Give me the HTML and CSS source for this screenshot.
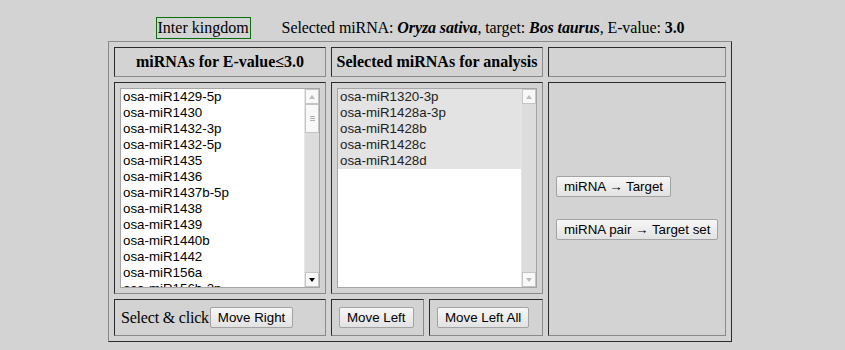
FILE: index.html
```html
<!DOCTYPE html>
<html>
<head>
<meta charset="utf-8">
<title>miRNA selection</title>
<link rel="stylesheet" href="styles.css">
</head>
<body>
<div class="page">
  <div class="title">
    <span class="kingdom">Inter kingdom</span>
    <span class="sel">Selected miRNA: <b><i>Oryza sativa</i></b>, target: <b><i>Bos taurus</i></b>, E-value: <b>3.0</b></span>
  </div>
  <div class="panel">
    <div class="cell head c1">miRNAs for E-value≤3.0</div>
    <div class="cell head c2">Selected miRNAs for analysis</div>
    <div class="cell head c3"></div>

    <div class="cell list c1">
      <div class="listbox">
        <div class="items">
          <div class="opt">osa-miR1429-5p</div>
          <div class="opt">osa-miR1430</div>
          <div class="opt">osa-miR1432-3p</div>
          <div class="opt">osa-miR1432-5p</div>
          <div class="opt">osa-miR1435</div>
          <div class="opt">osa-miR1436</div>
          <div class="opt">osa-miR1437b-5p</div>
          <div class="opt">osa-miR1438</div>
          <div class="opt">osa-miR1439</div>
          <div class="opt">osa-miR1440b</div>
          <div class="opt">osa-miR1442</div>
          <div class="opt">osa-miR156a</div>
          <div class="opt">osa-miR156b-3p</div>
        </div>
        <div class="sbar">
          <div class="sbtn"><span class="tri up off"></span></div>
          <div class="thumb"><span class="grip"></span></div>
          <div class="track"></div>
          <div class="sbtn"><span class="tri down"></span></div>
        </div>
      </div>
    </div>

    <div class="cell list c2">
      <div class="listbox">
        <div class="items">
          <div class="opt chosen">osa-miR1320-3p</div>
          <div class="opt chosen">osa-miR1428a-3p</div>
          <div class="opt chosen">osa-miR1428b</div>
          <div class="opt chosen">osa-miR1428c</div>
          <div class="opt chosen">osa-miR1428d</div>
        </div>
        <div class="sbar">
          <div class="sbtn"><span class="tri up off"></span></div>
          <div class="track"></div>
          <div class="sbtn"><span class="tri down off"></span></div>
        </div>
      </div>
    </div>

    <div class="cell actions c3">
      <button class="btn">miRNA → Target</button>
      <button class="btn">miRNA pair → Target set</button>
    </div>

    <div class="cell bottom c1"><span class="label">Select &amp; click</span><button class="btn">Move Right</button></div>
    <div class="cell bottom c2a"><button class="btn">Move Left</button></div>
    <div class="cell bottom c2b"><button class="btn">Move Left All</button></div>
  </div>
</div>
</body>
</html>
```

FILE: styles.css
```css
html, body {
  background: #d3d3d3;
}
body {
  margin: 8px;
  font-family: "Liberation Serif", "Times New Roman", serif;
  font-size: 16px;
  color: #000;
}
.page {
  margin-left: 100px;
  width: 624px;
}
.title {
  display: flex;
  justify-content: center;
  align-items: baseline;
  padding-top: 9px;
  margin-bottom: 2px;
  line-height: 18px;
}
.kingdom {
  display: inline-block;
  border: 1px solid #0a6e0a;
  padding: 1px 1px;
  margin-right: 31px;
}
.sel {
  letter-spacing: -0.1px;
}
.panel {
  display: grid;
  grid-template-columns: 212px 93px 114px 178px;
  grid-template-rows: 30px 212px 37px;
  gap: 5px;
  padding: 5px;
  border: 1px solid;
  border-color: #8a8a8a #2a2a2a #2a2a2a #8a8a8a;
}
.cell {
  box-sizing: border-box;
  border: 1px solid;
  border-color: #2a2a2a #8a8a8a #8a8a8a #2a2a2a;
}
.c1 { grid-column: 1; }
.c2 { grid-column: 2 / 4; }
.c2a { grid-column: 2; }
.c2b { grid-column: 3; }
.c3 { grid-column: 4; }
.head {
  display: flex;
  align-items: center;
  justify-content: center;
  font-weight: bold;
}
.list {
  padding: 5px;
}
.listbox {
  box-sizing: border-box;
  width: 200px;
  height: 200px;
  border: 1px solid #a5a5a5;
  background: #fff;
  display: flex;
}
.items {
  flex: 1;
  overflow: hidden;
  font-family: "Liberation Sans", Arial, sans-serif;
  font-size: 13.33px;
  line-height: 15px;
}
.opt {
  padding: 0 2px 1px;
  white-space: nowrap;
  color: #000;
}
.opt.chosen {
  background: #e3e3e3;
  color: #222;
}
.sbar {
  width: 15px;
  display: flex;
  flex-direction: column;
  background: #dcdcdc;
  border-left: 1px solid #e6e6e6;
  box-sizing: border-box;
}
.sbtn {
  height: 15px;
  box-sizing: border-box;
  border: 1px solid #c4c4c4;
  background: #f8f8f8;
  display: flex;
  align-items: center;
  justify-content: center;
}
.thumb {
  height: 29px;
  box-sizing: border-box;
  border: 1px solid #c4c4c4;
  background: #f8f8f8;
  display: flex;
  align-items: center;
  justify-content: center;
}
.grip {
  width: 5px;
  height: 5px;
  border-top: 1px solid #b0b0b0;
  border-bottom: 1px solid #b0b0b0;
  box-sizing: border-box;
  background: linear-gradient(#b0b0b0, #b0b0b0) center / 100% 1px no-repeat;
}
.track {
  flex: 1;
}
.tri {
  width: 0;
  height: 0;
  border-left: 3px solid transparent;
  border-right: 3px solid transparent;
}
.tri.up { border-bottom: 4px solid #000; }
.tri.down { border-top: 4px solid #000; }
.tri.up.off { border-bottom-color: #bcbcbc; }
.tri.down.off { border-top-color: #bcbcbc; }
.actions {
  grid-row: 2 / 4;
  display: flex;
  flex-direction: column;
  justify-content: center;
  align-items: flex-start;
  gap: 22px;
  padding-left: 7px;
  padding-bottom: 2px;
}
.bottom {
  display: flex;
  align-items: center;
  padding-left: 6px;
}
.c2a, .c2b {
  padding-left: 7px;
}
.label {
  letter-spacing: -0.2px;
  margin-right: 1px;
}
.btn {
  height: 21px;
  margin: 0;
  padding: 0 7px;
  font-family: "Liberation Sans", Arial, sans-serif;
  font-size: 13.33px;
  color: #000;
  border: 1px solid #a3a3a3;
  border-radius: 2px;
  background: linear-gradient(#f7f7f7, #e2e2e2);
}
```
